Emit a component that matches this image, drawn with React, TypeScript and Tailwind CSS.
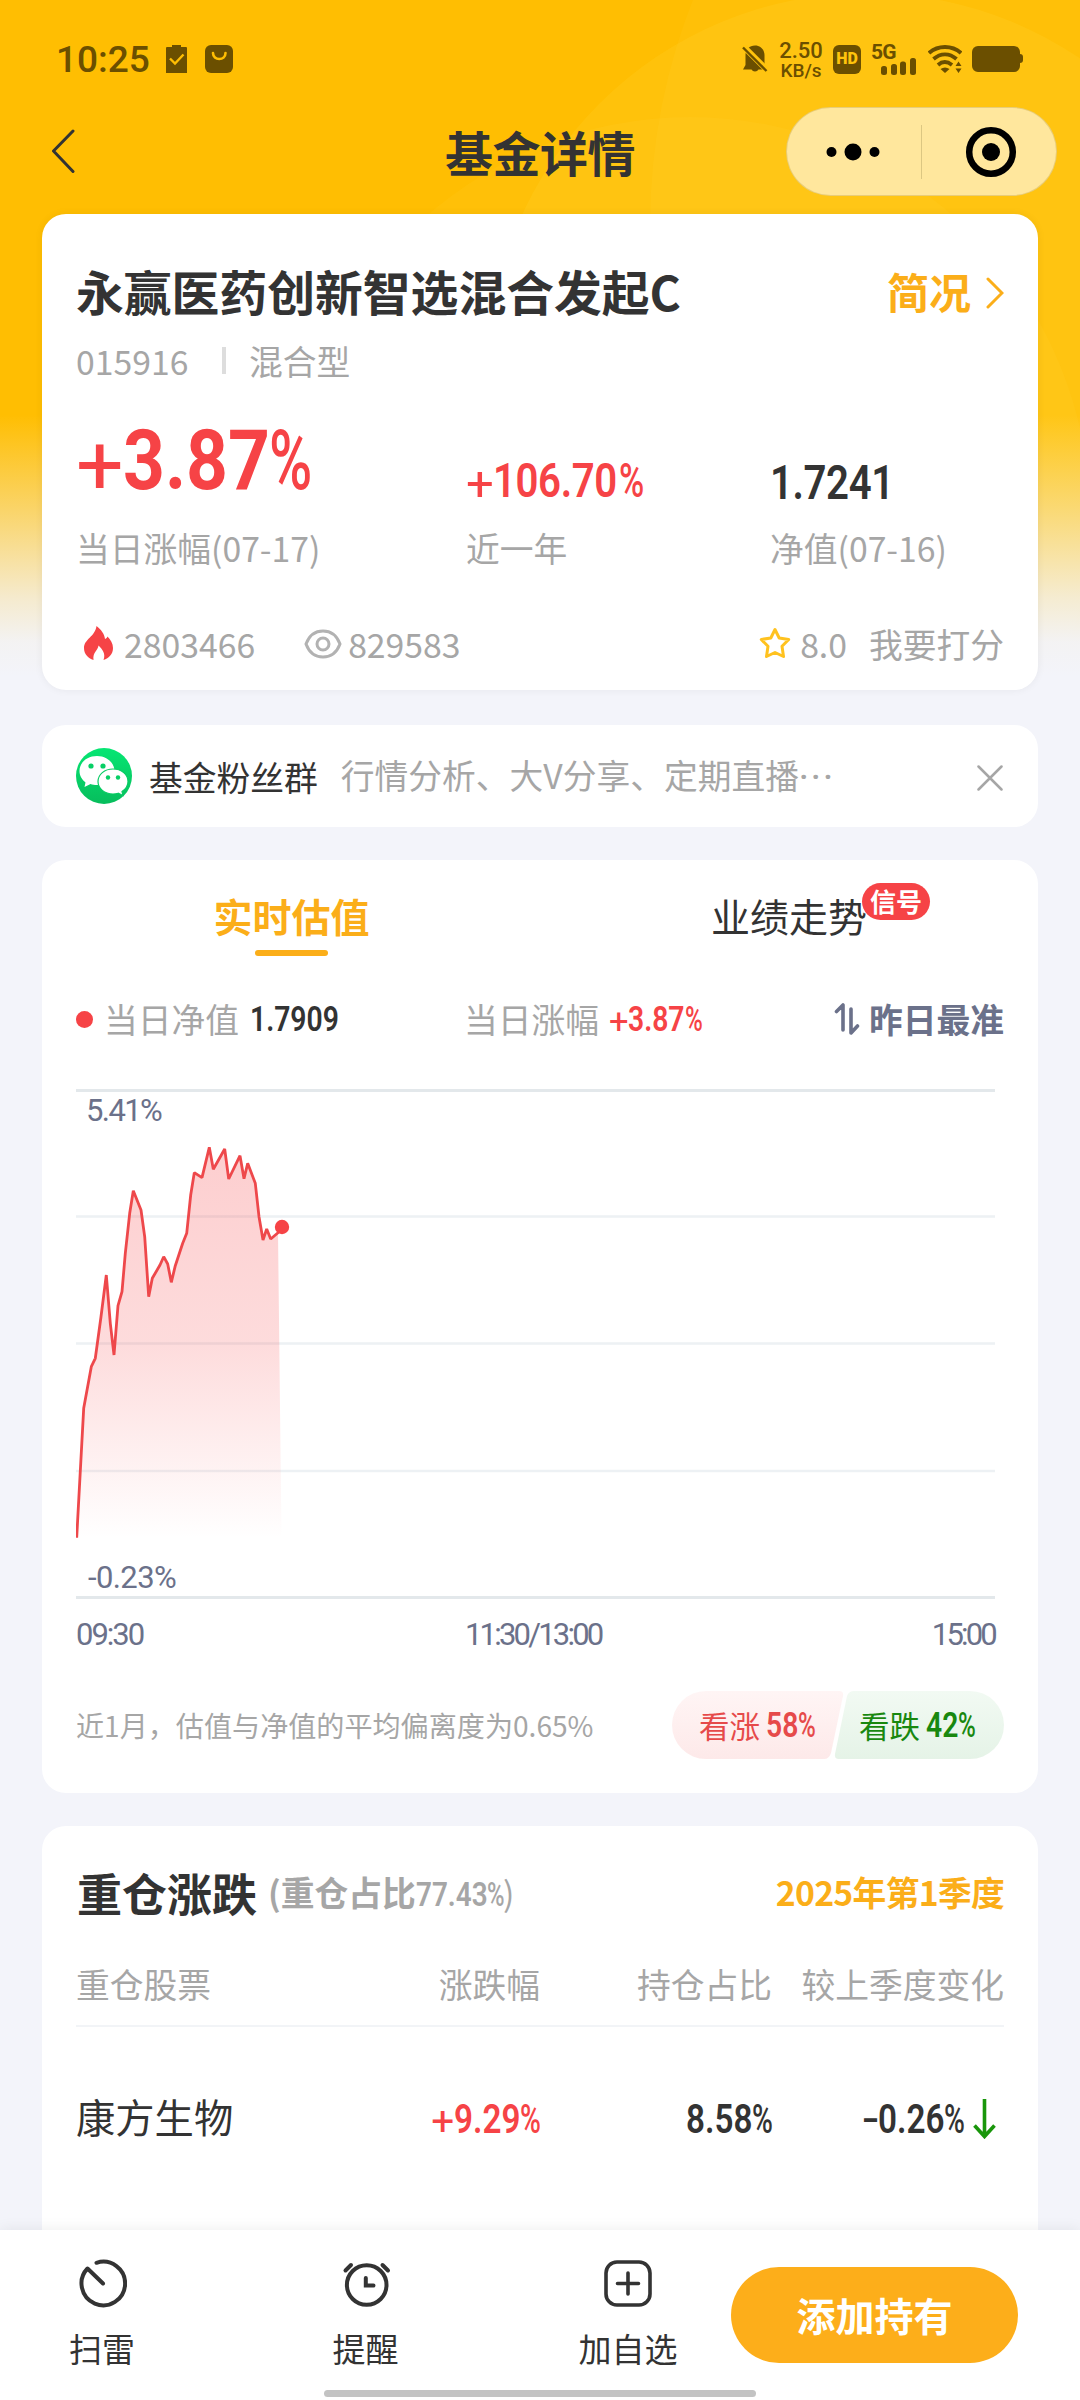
import type { ReactNode } from 'react';

const points = [
  [0.7, 448.7], [7.7, 319.3], [15.3, 277.7], [19.3, 269.3], [25, 227.7], [30.3, 186], [34.3, 234.3],
  [38, 266], [42, 216.7], [46, 202.7], [49.3, 164.3], [53.7, 124.3], [57.3, 101.7], [65, 121],
  [68.7, 147.7], [72.7, 207.7], [76.3, 189.3], [84, 176], [87.7, 167.7], [91.7, 175], [95.3, 193.3],
  [99.3, 176.7], [106.7, 154.3], [110.7, 144.3], [114.7, 106], [118.3, 83.7], [126, 88.7],
  [133.3, 58.3], [137.3, 80.3], [148.7, 60], [152.7, 90], [164, 66.7], [168, 89.7], [171.7, 74.3],
  [179.3, 94.3], [183, 127.7], [187, 151], [190.7, 140], [194.7, 150], [202, 143.7],
];

const linePoints = points.map((p) => p.join(',')).join(' ');

const holdings = [{ name: '康方生物', change: '+9.29%', ratio: '8.58%', diff: '-0.26%' }];

// Condensed figures: sign, digits and percent are squeezed separately
function Figure({ value, className = '', wide = false }: { value: string; className?: string; wide?: boolean }) {
  const match = value.match(/^([+-]?)([\d.]+)(%?)$/);
  const sign = match ? match[1] : '';
  const body = match ? match[2] : value;
  const percent = match ? match[3] : '';
  const digits = body.replace('.', '').length;
  const dots = body.length - digits;
  const width = wide ? digits * 0.5 + dots * 0.24 : digits * 0.468 + dots * 0.23;

  return (
    <span className={`inline-flex whitespace-nowrap font-['Roboto',sans-serif] leading-none ${className}`}>
      {sign === '+' && <span className="w-[0.56em] translate-y-[0.06em] font-normal">+</span>}
      {sign === '-' && <span className="w-[0.4em] origin-left scale-x-125 font-medium">-</span>}
      <span
        className={`origin-left ${wide ? 'scale-x-[0.87] font-bold' : 'scale-x-[0.82] font-semibold'}`}
        style={{ width: `${width}em` }}
      >
        {body}
      </span>
      {percent && <span className="w-[0.49em] origin-left scale-x-[0.7] font-medium">%</span>}
    </span>
  );
}

function Card({ children, className = '' }: { children: ReactNode; className?: string }) {
  return <section className={`mx-[42px] rounded-[24px] bg-white px-[34px] ${className}`}>{children}</section>;
}

function Backdrop() {
  return (
    <svg className="absolute inset-x-0 top-0" width="1080" height="676" viewBox="0 0 1080 676">
      <defs>
        <linearGradient id="fade" x1="0" y1="0" x2="0" y2="1">
          <stop offset="0" stopColor="#f3f4fa" stopOpacity="0" />
          <stop offset="0.35" stopColor="#f3f4fa" stopOpacity="0.4" />
          <stop offset="0.7" stopColor="#f3f4fa" stopOpacity="0.82" />
          <stop offset="0.87" stopColor="#f3f4fa" stopOpacity="0.97" />
          <stop offset="1" stopColor="#f3f4fa" stopOpacity="1" />
        </linearGradient>
      </defs>
      <rect width="1080" height="676" fill="#ffbe02" />
      <circle cx="867" cy="372" r="379" fill="#ffe34f" fillOpacity="0.12" />
      <circle cx="1262" cy="225" r="612" fill="#ffe34f" fillOpacity="0.09" />
      <circle cx="690" cy="517" r="400" fill="#ffe34f" fillOpacity="0.09" />
      <rect y="415" width="1080" height="261" fill="url(#fade)" />
    </svg>
  );
}

function StatusBar() {
  return (
    <div className="flex h-[107px] items-center justify-between pt-[11px] pr-[57px] pl-[56px] text-[#6b4f00]">
      <div className="flex items-center">
        <span className="w-[110px] font-['Roboto',sans-serif] text-[37px] leading-none font-medium">10:25</span>
        <svg width="21" height="28" viewBox="0 0 21 28">
          <path d="M6 2V0h9v2h5a1 1 0 0 1 1 1v25H0V3a1 1 0 0 1 1-1z" fill="currentColor" />
          <path d="M4 13.500l5 5 8.500-9" fill="none" stroke="#ffbe02" strokeWidth="2.400" />
        </svg>
        <svg className="ml-[18px]" width="28" height="28" viewBox="0 0 28 28">
          <rect width="28" height="28" rx="6" fill="currentColor" />
          <path d="M8 8c0 8 12.500 8 12.500 0" fill="none" stroke="#ffbe02" strokeWidth="2.600" strokeLinecap="round" />
        </svg>
      </div>
      <div className="flex items-center">
        <svg width="26" height="28" viewBox="0 0 26 28">
          <path d="M13 0.500c5.500 0 9.500 4 9.500 9.500v10l2.500 4.500h-8.500a4 4 0 0 1-7 0H1l2.500-4.500V10c0-5.500 4-9.500 9.500-9.500z" fill="currentColor" />
          <path d="M0 0L26 26" stroke="#ffc40c" strokeWidth="6" />
          <path d="M1 2.500L24.500 26" stroke="currentColor" strokeWidth="2.400" />
        </svg>
        <div className="ml-[10px] flex w-[46px] flex-col items-center pt-[2px] font-['Roboto',sans-serif] font-medium">
          <span className="text-[22px] leading-[21px]">2.50</span>
          <span className="text-[19px] leading-[19px]">KB/s</span>
        </div>
        <span className="ml-[9px] flex h-[29px] w-[28px] items-center justify-center rounded-[6px] bg-[#6b4f00] font-['Roboto',sans-serif] text-[16px] font-black text-[#ffc40c]">
          HD
        </span>
        <div className="relative ml-[10px] h-[31px] w-[46px]">
          <span className="absolute -top-px left-0 font-['Roboto',sans-serif] text-[21px] leading-[18px] font-bold tracking-[-0.8px]">5G</span>
          <svg className="absolute bottom-0 left-[10px]" width="36" height="17" viewBox="0 0 36 17" fill="currentColor">
            <rect x="0" y="8" width="6" height="9" rx="2.500" />
            <rect x="10" y="6" width="6" height="11" rx="2.500" />
            <rect x="19" y="3.500" width="6" height="13.500" rx="2.500" />
            <rect x="29" y="0" width="6" height="17" rx="2.500" />
          </svg>
        </div>
        <svg className="ml-[11px]" width="34" height="28" viewBox="0 0 34 28">
          <g fill="none" stroke="currentColor" strokeWidth="3.800">
            <path d="M1 8c9-8 23-8 32 0" />
            <path d="M5.500 14c7-6.300 16-6.300 23 0" />
            <path d="M10 20c4.500-4 9-4 14 0" />
          </g>
          <path d="M12.500 24c3-2 6-2 9 0L17 28zM27.500 21l3-4.500 3 4.500zM27.500 23.500h6l-3 4.500z" fill="currentColor" />
        </svg>
        <svg className="ml-[10px]" width="51" height="26" viewBox="0 0 51 26" fill="currentColor">
          <rect width="48" height="26" rx="6" />
          <rect x="44" y="8" width="7" height="9" rx="3" />
        </svg>
      </div>
    </div>
  );
}

function NavBar() {
  return (
    <div className="relative flex h-[89px] items-center justify-between pr-[23px] pl-[51px]">
      <svg width="26" height="46" viewBox="0 0 26 46" fill="none" stroke="#333" strokeWidth="3" strokeLinecap="round" strokeLinejoin="round">
        <path d="M22 2L2.500 22L22 42.500" />
      </svg>
      <h1 className="absolute inset-x-0 top-0 text-center text-[48px] leading-[89px] font-bold tracking-[-0.5px] text-[#333]">基金详情</h1>
      <div className="relative flex h-[89px] w-[271px] items-center rounded-full border border-[#d9bd63]/60 bg-[#ffe79d]">
        <svg className="ml-[39px]" width="54" height="20" viewBox="0 0 54 20">
          <circle cx="5.500" cy="10" r="5" />
          <circle cx="27" cy="10" r="8.500" />
          <circle cx="48.500" cy="10" r="5" />
        </svg>
        <span className="ml-[41px] h-[54px] w-px bg-[#dcc782]" />
        <svg className="ml-[43px]" width="52" height="52" viewBox="0 0 52 52">
          <circle cx="26" cy="26" r="21.800" fill="none" stroke="#000" strokeWidth="6.500" />
          <circle cx="26" cy="26" r="9" />
        </svg>
      </div>
    </div>
  );
}

function SummaryCard() {
  return (
    <Card className="mt-[18px] h-[476px] pt-[45px] shadow-[0_0_8px_rgba(0,0,0,0.06)]">
      <div className="flex h-[64px] items-center justify-between">
        <h2 className="text-[47.8px] leading-none font-bold text-[#333]">永赢医药创新智选混合发起C</h2>
        <div className="flex items-center gap-[15px] text-[#fbae19]">
          <span className="text-[42px] leading-none font-bold">简况</span>
          <svg className="mt-[3px]" width="18" height="32" viewBox="0 0 18 32" fill="none" stroke="currentColor" strokeWidth="3" strokeLinecap="round">
            <path d="M2 2l14 14L2 30" />
          </svg>
        </div>
      </div>
      <div className="mt-[17px] flex h-[42px] items-center text-[33.75px] leading-none text-[#a6a6a6]">
        <span className="w-[146px]">015916</span>
        <span className="-mt-px h-[27px] w-[4px] bg-[#ddd]" />
        <span className="ml-[23px]">混合型</span>
      </div>
      <div className="mt-[35px] grid grid-cols-[390px_304px_1fr] text-[33.75px] text-[#a6a6a6]">
        <div>
          <div className="h-[107px] pt-[2px]">
            <Figure value="+3.87%" wide className="text-[84px] text-[#f64346]" />
          </div>
          <div className="leading-[48px]">当日涨幅(07-17)</div>
        </div>
        <div>
          <div className="h-[107px] pt-[39px]">
            <Figure value="+106.70%" className="text-[49px] tracking-[-0.5px] text-[#f64346]" />
          </div>
          <div className="leading-[48px]">近一年</div>
        </div>
        <div>
          <div className="h-[107px] pt-[41px]">
            <Figure value="1.7241" className="text-[49px] tracking-[-0.5px] text-[#333]" />
          </div>
          <div className="leading-[48px]">净值(07-16)</div>
        </div>
      </div>
      <div className="mt-[45px] flex h-[54px] items-center text-[33.75px] leading-none text-[#a6a6a6]">
        <svg className="-mt-[3px] ml-[8px]" width="29" height="34" viewBox="0 0 29 34">
          <path d="M12.500 0c5 4 8 8 8.500 13 1.500-.5 2-1.500 2.500-2.500 3 3 5.500 7 5.500 11.500 0 6-4 10-9.500 12 2.500-6-1-10.500-5-14.500-.5 5-6 6.500-5 14.500C4 32 0 28 0 22 0 13 11 11 12.500 0z" fill="#f64346" />
        </svg>
        <span className="ml-[11px]">2803466</span>
        <svg className="ml-[49px]" width="38" height="30" viewBox="0 0 38 30" fill="none" stroke="#b2b2b2" strokeWidth="3">
          <path d="M2 15C5 7 11 2 19 2s14 5 17 13c-3 8-9 13-17 13S5 23 2 15z" />
          <circle cx="19" cy="15" r="6" />
        </svg>
        <span className="ml-[6px]">829583</span>
        <svg className="-mt-[2px] ml-auto" width="32" height="32" viewBox="0 0 32 32" fill="none" stroke="#ffc21f" strokeWidth="3" strokeLinejoin="round">
          <path d="M16 2.500l4.200 8.500 9.500 1.500-6.700 6.800 1.500 10.200L16 25.500l-8.500 4L9 19.300 2.300 12.500l9.500-1.500z" />
        </svg>
        <span className="ml-[9px]">8.0</span>
        <span className="ml-[22px]">我要打分</span>
      </div>
    </Card>
  );
}

function GroupCard() {
  return (
    <Card className="mt-[35px] flex h-[102px] items-center text-[33.75px] leading-none">
      <svg width="56" height="56" viewBox="0 0 56 56">
        <defs>
          <linearGradient id="wechat" x1="0" y1="0" x2="0" y2="1">
            <stop offset="0" stopColor="#06e673" />
            <stop offset="1" stopColor="#07bd5c" />
          </linearGradient>
        </defs>
        <circle cx="28" cy="28" r="28" fill="url(#wechat)" />
        <path d="M21 8C11 8 3.500 14.500 3.500 23c0 5 2.500 8.500 6 11.500L8.500 39l6-3c2 .7 4 1 6.500 1 10 0 17.500-6 17.500-14S31 8 21 8z" fill="#fff" />
        <path d="M37 21c-8.500 0-15 5.500-15 12.500S28.500 46 37 46c2 0 3.700-.3 5.200-.8L47 47.500l-1-4c3.500-2.200 6-5.800 6-10C52 26.500 45.500 21 37 21z" fill="#fff" stroke="#07cb63" strokeWidth="1.200" />
        <g fill="#07cf65">
          <circle cx="15" cy="18" r="2.600" />
          <circle cx="27" cy="18" r="2.600" />
          <circle cx="32" cy="29.500" r="2.200" />
          <circle cx="42" cy="29.500" r="2.200" />
        </g>
      </svg>
      <span className="mt-px ml-[17px] text-[#333]">基金粉丝群</span>
      <span className="mt-px ml-[23px] text-[#a6a6a6]">
        行情分析、大V分享、定期直播
        <span className="font-['Roboto',sans-serif] font-medium tracking-[2.6px]">···</span>
      </span>
      <svg className="mt-[3px] mr-px ml-auto" width="26" height="26" viewBox="0 0 26 26" stroke="#a6a6a6" strokeWidth="2.500" strokeLinecap="round">
        <path d="M1.500 1.500l23 23M24.500 1.500l-23 23" />
      </svg>
    </Card>
  );
}

function EstimateChart() {
  return (
    <div className="relative mt-[45px] h-[511px] font-['Roboto',sans-serif] text-[31px] leading-none text-[#6b718a]">
      <svg width="928" height="511" viewBox="0 0 928 511">
        <defs>
          <linearGradient id="area" x1="0" y1="58" x2="0" y2="449" gradientUnits="userSpaceOnUse">
            <stop offset="0" stopColor="#f64346" stopOpacity="0.26" />
            <stop offset="0.5" stopColor="#f64346" stopOpacity="0.19" />
            <stop offset="1" stopColor="#f64346" stopOpacity="0" />
          </linearGradient>
        </defs>
        <g stroke="#edf1f4" strokeWidth="2.600">
          <path d="M0 127.500H919M0 254.500H919M0 382H919" />
        </g>
        <path d="M0 1.500H919M0 508.500H919" stroke="#e3e8eb" strokeWidth="3" />
        <polygon points={`${linePoints} 205.500,449 0,449`} fill="url(#area)" />
        <polyline points={`${linePoints} 206,138`} fill="none" stroke="#ee484b" strokeWidth="2.800" strokeLinejoin="bevel" />
        <circle cx="206" cy="138" r="7.200" fill="#f64346" />
      </svg>
      <span className="absolute top-[6px] left-[10px] tracking-[-1.6px]">5.41%</span>
      <span className="absolute top-[473px] left-[12px] tracking-[-0.6px]">-0.23%</span>
    </div>
  );
}

function EstimateCard() {
  return (
    <Card className="mt-[33px] h-[933px] pt-[20px]">
      <div className="grid h-[76px] grid-cols-[431px_497px] text-[39px] leading-[70px]">
        <div className="flex flex-col items-center font-bold text-[#fbae19]">
          <span>实时估值</span>
          <span className="h-[6px] w-[73px] rounded-full bg-[#fbae19]" />
        </div>
        <div className="relative pl-[204px] text-[#333]">
          业绩走势
          <span className="absolute top-[3px] left-[355px] flex h-[37px] w-[68px] items-center justify-center rounded-full bg-[#f64346] pb-[2px] text-[26px] leading-none font-bold text-white">
            信号
          </span>
        </div>
      </div>
      <div className="mt-[39px] flex h-[48px] items-center text-[33.75px] leading-none text-[#a6a6a6]">
        <span className="h-[17px] w-[17px] rounded-full bg-[#f64346]" />
        <div className="ml-[11px] flex w-[360px] items-center gap-[11px]">
          <span>当日净值</span>
          <Figure value="1.7909" className="text-[34.5px] text-[#333]" />
        </div>
        <div className="flex items-center gap-[10px]">
          <span>当日涨幅</span>
          <Figure value="+3.87%" className="text-[34.5px] text-[#f64346]" />
        </div>
        <div className="ml-auto flex items-center gap-[9px] font-bold text-[#6b718a]">
          <svg width="26" height="32" viewBox="0 0 26 32" fill="none" stroke="currentColor" strokeWidth="3.600" strokeLinecap="round" strokeLinejoin="round">
            <path d="M2.500 8.500L9 2v25M17 6v24l6.500-7" />
          </svg>
          <span>昨日最准</span>
        </div>
      </div>
      {/* stats row sits 1px higher than the chart grid */}
      <div className="pt-px">
        <EstimateChart />
      </div>
      <div className="mt-[19px] grid h-[31px] grid-cols-[389px_1fr_auto] pr-[9px] font-['Roboto',sans-serif] text-[31px] leading-[31px] text-[#6b718a]">
        <span className="tracking-[-2px]">09:30</span>
        <span className="tracking-[-2.800px]">11:30/13:00</span>
        <span className="tracking-[-2.800px]">15:00</span>
      </div>
      <div className="mt-[41px] flex h-[68px] items-center justify-between">
        <span className="text-[28.1px] leading-none text-[#a6a6a6]">近1月，估值与净值的平均偏离度为0.65%</span>
        <div className="relative h-[68px] w-[332px]">
          <svg className="absolute inset-0" width="332" height="68" viewBox="0 0 332 68">
            <defs>
              <linearGradient id="up" x1="0" y1="0" x2="0" y2="1">
                <stop offset="0" stopColor="#fff5f5" />
                <stop offset="1" stopColor="#fde9e9" />
              </linearGradient>
              <linearGradient id="down" x1="0" y1="0" x2="0" y2="1">
                <stop offset="0" stopColor="#f2faf3" />
                <stop offset="1" stopColor="#e5f3e7" />
              </linearGradient>
            </defs>
            <path d="M34 0H167Q172 0 171 5L159 62Q157 68 152 68H34A34 34 0 0 1 34 0z" fill="url(#up)" />
            <path d="M182 0H298A34 34 0 0 1 298 68H167Q162 68 163 63L175 5Q177 0 182 0z" fill="url(#down)" />
          </svg>
          <div className="relative flex h-full items-center text-[30.5px] leading-none">
            <div className="ml-[27px] flex w-[160px] items-center gap-[6px] text-[#e64a4a]">
              <span>看涨</span>
              <Figure value="58%" className="text-[34.5px]" />
            </div>
            <div className="flex items-center gap-[6px] text-[#19880f]">
              <span>看跌</span>
              <Figure value="42%" className="text-[34.5px]" />
            </div>
          </div>
        </div>
      </div>
    </Card>
  );
}

function HoldingsCard() {
  return (
    <Card className="mt-[33px] h-[460px] pt-[33px]">
      <div className="flex h-[66px] items-center leading-none">
        <h2 className="pl-px text-[45px] font-bold text-[#333]">重仓涨跌</h2>
        <div className="ml-[11px] flex items-center text-[33.75px] font-bold text-[#a6a6a6]">
          <span>(重仓占比</span>
          <Figure value="77.43%" className="mt-[3px] text-[34px]" />
          <span className="-ml-px font-normal">)</span>
        </div>
        <span className="ml-auto text-[33.75px] font-bold tracking-[-0.7px] text-[#fbae19]">2025年第1季度</span>
      </div>
      <div className="mt-[33px] grid h-[69px] grid-cols-[232px_232px_232px_232px] border-b-2 border-[#f2f4f7] text-right text-[33.75px] leading-[52px] text-[#a6a6a6]">
        <span className="text-left">重仓股票</span>
        <span>涨跌幅</span>
        <span>持仓占比</span>
        <span>较上季度变化</span>
      </div>
      {holdings.map((item) => (
        <div key={item.name} className="grid h-[184px] grid-cols-[232px_232px_232px_232px] items-center justify-items-end text-[39.3px] leading-none text-[#333]">
          <span className="-mt-[7px] justify-self-start">{item.name}</span>
          <Figure value={item.change} className="text-[40.5px] text-[#f64346]" />
          <Figure value={item.ratio} className="text-[40.5px]" />
          <div className="flex items-center gap-[9px] pr-[8px]">
            <Figure value={item.diff} className="text-[40.5px]" />
            <svg width="23" height="40" viewBox="0 0 23 40" fill="none" stroke="#19960b" strokeWidth="3.600">
              <path d="M11.500 0v37M1.500 26.500l10 11 10-11" />
            </svg>
          </div>
        </div>
      ))}
    </Card>
  );
}

function BottomBar() {
  return (
    <footer className="relative flex h-[170px] shrink-0 bg-white text-[33px] leading-[44px] text-[#333] shadow-[0_0_14px_rgba(0,0,0,0.08)]">
      <div className="flex w-[204px] flex-col items-center gap-[17px] pt-[29px]">
        <svg width="50" height="50" viewBox="0 0 50 50" fill="none" stroke="currentColor" strokeWidth="4" strokeLinecap="round" strokeLinejoin="round">
          <path d="M19.500 3.800A21.800 21.800 0 1 1 10.500 9.500L26 24.500" />
        </svg>
        <span>扫雷</span>
      </div>
      <div className="ml-[61px] flex w-[201px] flex-col items-center gap-[17px] pt-[29px]">
        <svg width="50" height="50" viewBox="0 0 50 50" fill="none" stroke="currentColor" strokeWidth="4" strokeLinecap="round">
          <circle cx="25.700" cy="26" r="19.800" />
          <path d="M24.800 19v7.500h7.700M4.500 11.500l5.500-5.500M47 11.500l-5.500-5.500" />
        </svg>
        <span>提醒</span>
      </div>
      <div className="ml-[61px] flex w-[202px] flex-col items-center gap-[17px] pt-[29px]">
        <svg width="50" height="50" viewBox="0 0 50 50" fill="none" stroke="currentColor" strokeWidth="3.600" strokeLinecap="round">
          <rect x="3" y="3" width="44" height="43" rx="11" />
          <path d="M25 14v21M14.500 24.500h21" />
        </svg>
        <span>加自选</span>
      </div>
      <button className="mt-[37px] ml-[2px] h-[96px] w-[287px] rounded-full bg-[#fdae1a] pb-[2px] text-[39px] font-bold text-white">
        添加持有
      </button>
      <span className="absolute bottom-[3px] left-[324px] h-[7px] w-[432px] rounded-full bg-[#c3c3c3]" />
    </footer>
  );
}

export default function App() {
  return (
    <div className="flex h-[2400px] w-[1080px] flex-col overflow-hidden bg-[#f3f4fa] font-['Noto_Sans_CJK_SC',sans-serif]">
      <main className="relative min-h-0 flex-1 overflow-hidden">
        <Backdrop />
        <div className="relative">
          <StatusBar />
          <NavBar />
          <SummaryCard />
          <GroupCard />
          <EstimateCard />
          <HoldingsCard />
        </div>
      </main>
      <BottomBar />
    </div>
  );
}
